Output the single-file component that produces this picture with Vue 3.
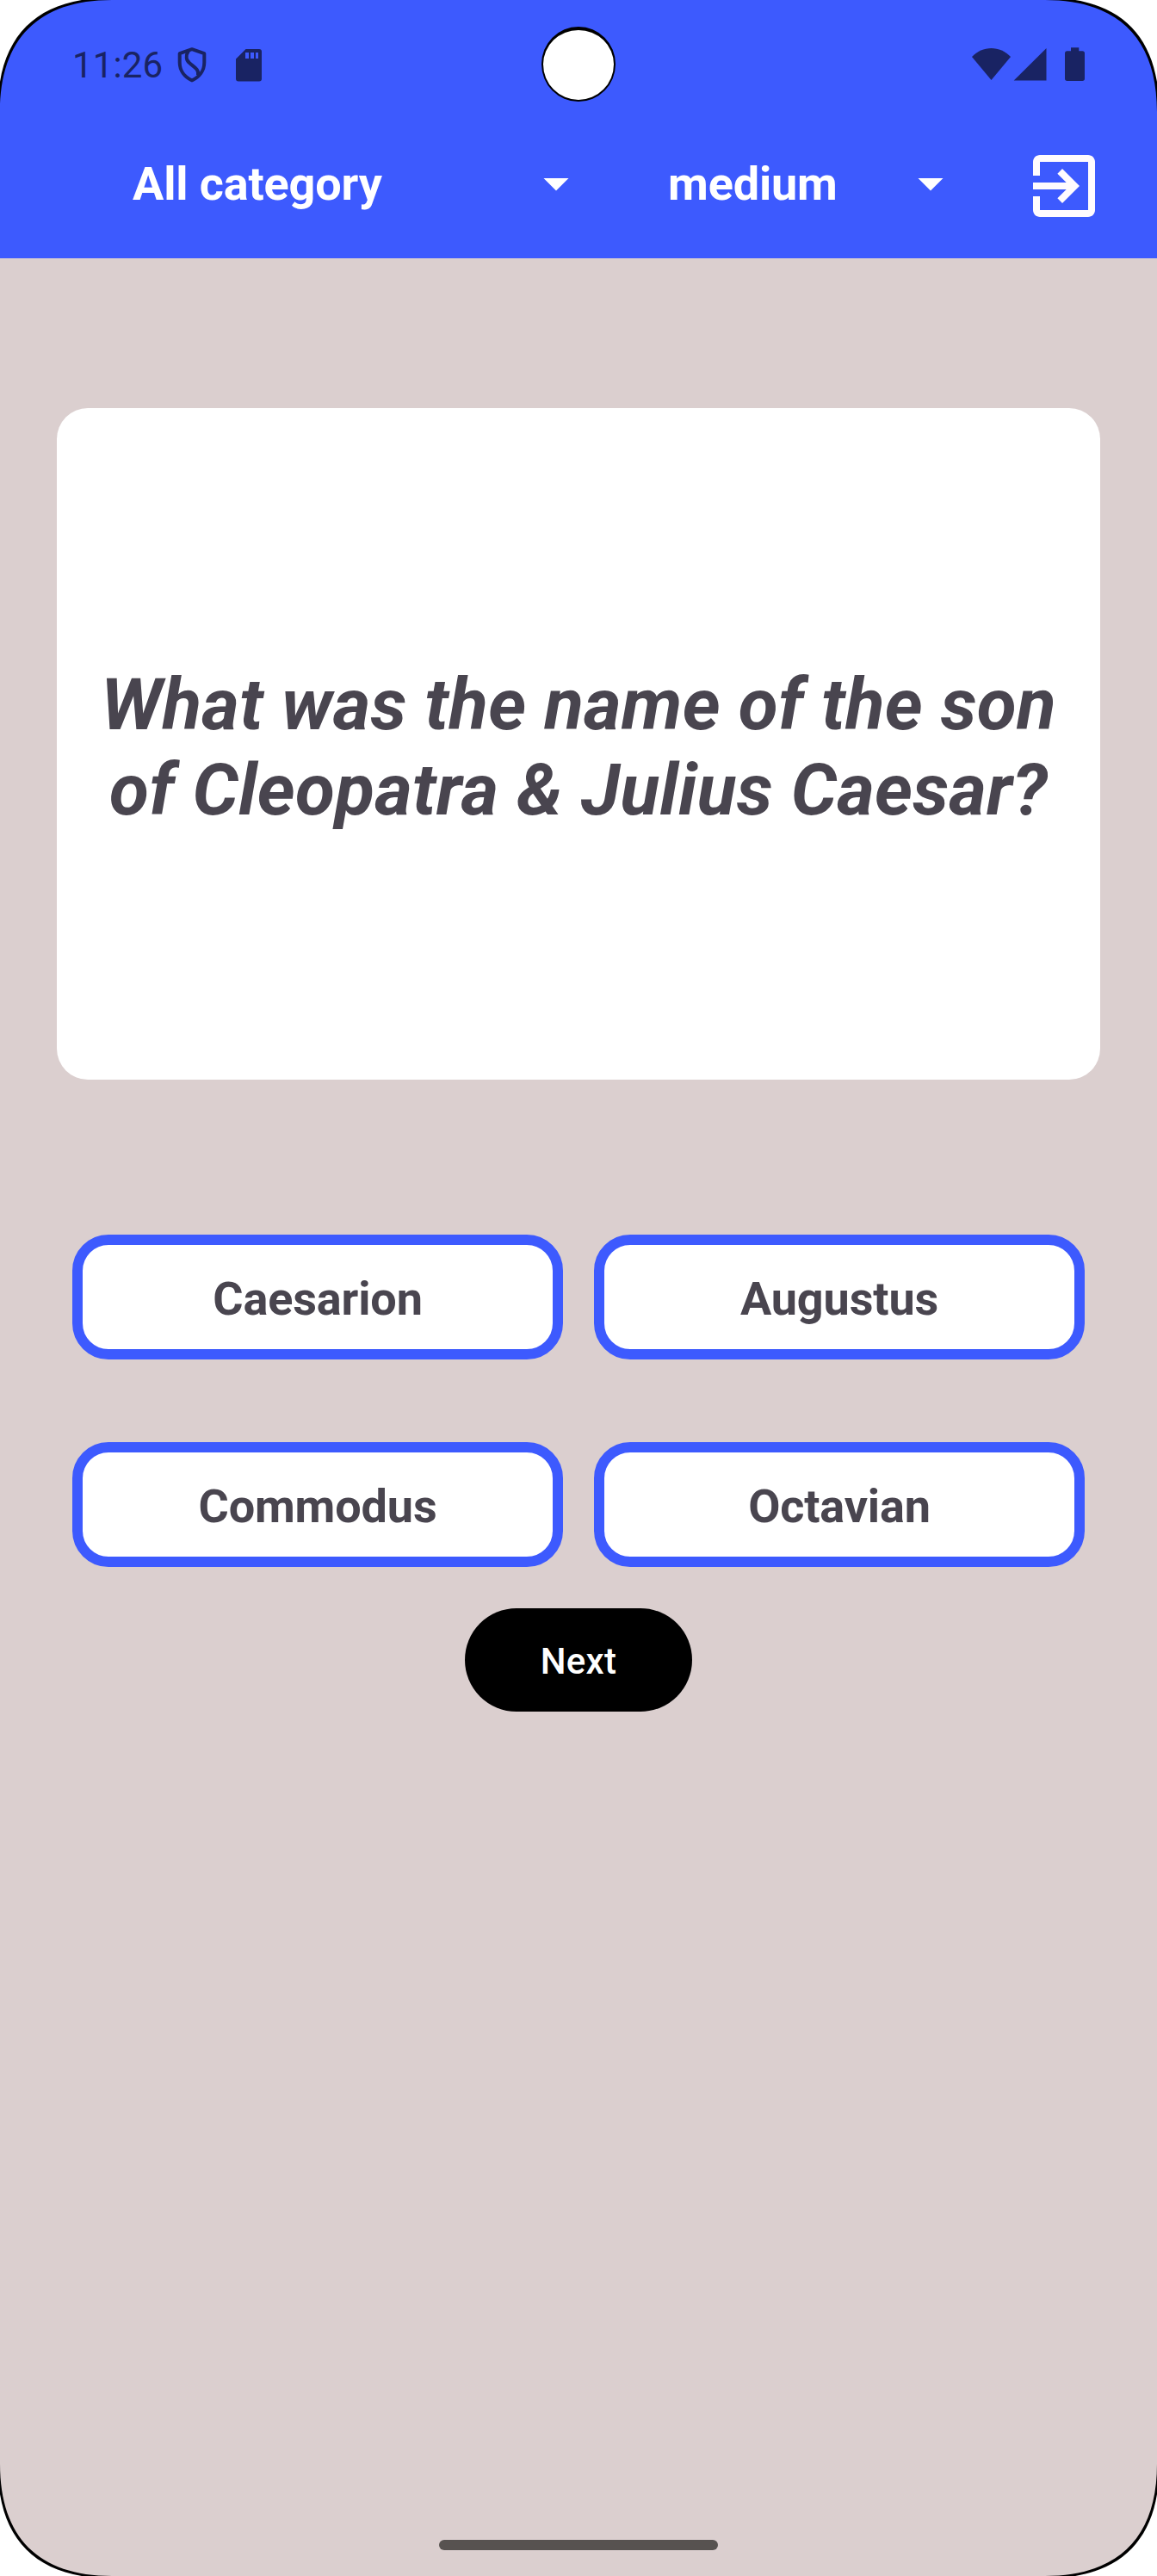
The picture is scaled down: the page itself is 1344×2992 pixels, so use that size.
<script setup>
import { ref } from 'vue'

const question = 'What was the name of the son of Cleopatra & Julius Caesar?'
const answers = ref(['Caesarion', 'Augustus', 'Commodus', 'Octavian'])
</script>

<template>
  <div class="device">
    <header class="top">
      <div class="status">
        <span class="time">11:26</span>
        <svg class="shield" width="34" height="42" viewBox="0 0 34 42" fill="none" stroke="#192363" stroke-width="4" stroke-linejoin="round">
          <path d="M17 3.200 31.300 8.200V18.500C31.300 28 25.500 35.500 17 39.300C8.500 35.500 2.700 28 2.700 18.500V8.200Z" />
          <path d="M13 5C9.500 10.500 10 16 14.500 19.500C19 23.500 25.500 26.500 24 33.500" />
        </svg>
        <svg class="sd" width="30" height="38" viewBox="0 0 30 38">
          <path fill="#192363" fill-rule="evenodd" d="M11.500 0H27a3 3 0 0 1 3 3V34.500a3 3 0 0 1-3 3H3a3 3 0 0 1-3-3V11.500ZM11 4V11H15V4ZM17 4V11H21V4ZM23 4V11H26V4Z" />
        </svg>
        <svg class="signals" width="132" height="40" viewBox="0 0 132 40" fill="#192363">
          <path d="M0 11C12-2.500 33-2.500 45 11L22.500 38Z" />
          <path d="M86.500 1V38.400H48.700Z" />
          <path d="M115 0.300h9.300v4h4a2.700 2.700 0 0 1 2.700 2.700V36.200a2.700 2.700 0 0 1-2.700 2.700H110.700a2.700 2.700 0 0 1-2.700-2.700V7A2.700 2.700 0 0 1 110.700 4.300h4.300Z" />
        </svg>
      </div>
      <nav class="bar">
        <div class="select category"><span>All category</span><i class="caret"></i></div>
        <div class="select level"><span>medium</span><i class="caret"></i></div>
        <svg class="exit" width="96" height="96" viewBox="0 0 24 24" fill="#fffbfe">
          <path d="M10.090 15.590 11.500 17l5-5-5-5-1.410 1.410L12.670 11H3v2h9.670l-2.580 2.590zM19 3H5c-1.110 0-2 .9-2 2v4h2V5h14v14H5v-4H3v4c0 1.100.89 2 2 2h14c1.100 0 2-.9 2-2V5c0-1.100-.9-2-2-2z" />
        </svg>
      </nav>
    </header>

    <main class="content">
      <section class="card"><p>{{ question }}</p></section>
      <div class="answers">
        <button v-for="a in answers" :key="a" class="answer">{{ a }}</button>
      </div>
      <button class="next">Next</button>
    </main>

    <div class="home"></div>

    <div class="camera"></div>
    <svg v-for="c in ['tl', 'tr', 'bl', 'br']" :key="c" class="corner" :class="c" width="132" height="132" viewBox="0 0 132 132">
      <path fill="#000" d="M0 0H130C45 0 0 45 0 130Z" />
      <path fill="#fff" d="M-2.500-2.500H127.500C42.500-2.500-2.500 42.500-2.500 127.500Z" />
    </svg>
  </div>
</template>

<style>
body {
  margin: 0;
  background: #fff;
}
</style>

<style scoped>
.device {
  position: relative;
  box-sizing: border-box;
  width: 1344px;
  height: 2992px;
  display: flex;
  flex-direction: column;
  overflow: hidden;
  background: #dbcfcf;
  font-family: Roboto, sans-serif;
}
.top {
  height: 300px;
  background: #3d5afe;
  flex: none;
}
.status {
  display: flex;
  align-items: center;
  height: 150px;
  padding: 0 83px 0 84px;
  box-sizing: border-box;
}
.time {
  width: 122px;
  padding-top: 1px;
  color: #192363;
  font-size: 42px;
  line-height: 50px;
  letter-spacing: 0.1px;
}
.shield {
  margin-right: 34px;
}
.sd {
  margin-top: 2px;
}
.signals {
  margin-left: auto;
}
.bar {
  display: flex;
  align-items: center;
  height: 132px;
}
.select {
  display: flex;
  align-items: center;
  justify-content: space-between;
  box-sizing: border-box;
  padding-bottom: 4px;
  color: #fff;
  font-size: 54px;
  line-height: 64px;
  font-weight: 700;
  letter-spacing: -0.15px;
}
.category {
  width: 661px;
  padding-left: 154px;
}
.level {
  width: 435px;
  padding-left: 115px;
}
.caret {
  width: 30px;
  height: 15px;
  background: #fff;
  clip-path: polygon(0 0, 100% 0, 50% 100%);
}
.exit {
  margin-left: 92px;
}
.content {
  flex: 1;
  display: flex;
  flex-direction: column;
  align-items: center;
  padding-top: 174px;
}
.card {
  width: 1212px;
  height: 780px;
  box-sizing: border-box;
  padding: 8px 30px 0;
  display: flex;
  align-items: center;
  border-radius: 36px;
  background: #fff;
}
.card p {
  margin: 0;
  width: 100%;
  text-align: center;
  color: #49454f;
  font-size: 84px;
  line-height: 99px;
  font-weight: 700;
  font-style: italic;
  letter-spacing: 0.2px;
}
.answers {
  display: grid;
  grid-template-columns: 570px 570px;
  gap: 96px 36px;
  margin-top: 180px;
}
.answer {
  height: 145px;
  padding: 5px 0 0;
  border: 12px solid #3d5afe;
  border-radius: 42px;
  background: #fff;
  color: #49454f;
  font: 700 54px/64px Roboto, sans-serif;
  letter-spacing: -0.15px;
}
.next {
  width: 264px;
  height: 120px;
  margin-top: 48px;
  padding: 3px 0 0;
  border: 0;
  border-radius: 60px;
  background: #000;
  color: #fff;
  font: 500 42px/60px Roboto, sans-serif;
  letter-spacing: 0.3px;
}
.home {
  flex: none;
  align-self: center;
  width: 324px;
  height: 12px;
  margin-bottom: 30px;
  border-radius: 6px;
  background: #575250;
}
.camera {
  position: absolute;
  left: 629px;
  top: 31px;
  width: 86px;
  height: 87px;
  box-sizing: border-box;
  border: 2px solid #000;
  border-top-width: 4px;
  border-radius: 50%;
  background: #fff;
}
.corner {
  position: absolute;
}
.tl {
  left: 0;
  top: 0;
}
.tr {
  right: 0;
  top: 0;
  transform: scaleX(-1);
}
.bl {
  left: 0;
  bottom: 0;
  transform: scaleY(-1);
}
.br {
  right: 0;
  bottom: 0;
  transform: scale(-1);
}
</style>
